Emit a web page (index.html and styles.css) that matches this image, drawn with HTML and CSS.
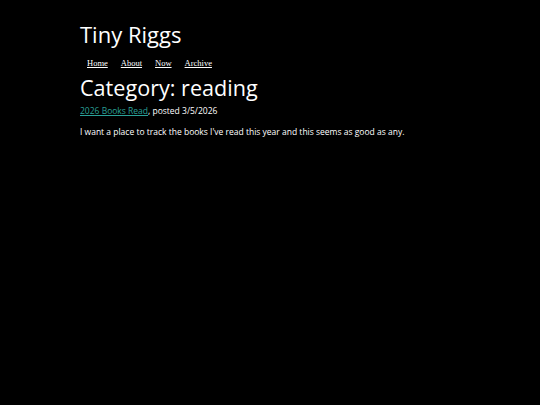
FILE: index.html
```html
<!DOCTYPE html>
<html>
<head>
<meta charset="utf-8">
<link rel="stylesheet" href="styles.css">
</head>
<body>
<div class="page">
  <header class="site-header">
    <h1 class="site-title">Tiny Riggs</h1>
    <nav class="nav">
      <a href="#">Home</a>
      <a href="#">About</a>
      <a href="#">Now</a>
      <a href="#">Archive</a>
    </nav>
  </header>
  <main>
    <h2 class="cat-title">Category: reading</h2>
    <p class="meta"><a class="post-link" href="#">2026 Books Read</a>, posted 3/5/2026</p>
    <p class="excerpt">I want a place to track the books I've read this year and this seems as good as any.</p>
  </main>
</div>
</body>
</html>
```
FILE: styles.css
```css
html, body {
  margin: 0;
  padding: 0;
  background: #000;
  color: #fff;
}
body {
  font-family: "Open Sans", sans-serif;
}
.page {
  padding: 18px 80px 0 80px;
}
.site-title {
  margin: 0;
  font-size: 22px;
  font-weight: 400;
  line-height: 32px;
}
.nav {
  display: flex;
  gap: 13px;
  padding-left: 7px;
  margin-top: 8px;
  font-family: "Liberation Serif", serif;
  font-size: 8.5px;
}
.nav a {
  color: #fff;
}
.cat-title {
  margin: 4px 0 0 0;
  font-size: 21.6px;
  font-weight: 400;
  line-height: 32px;
}
.meta {
  margin: 0;
  font-size: 8.5px;
  line-height: 14px;
}
.post-link {
  color: #2aa198;
}
.excerpt {
  margin: 7px 0 0 0;
  font-size: 8.5px;
  line-height: 14px;
}
```
